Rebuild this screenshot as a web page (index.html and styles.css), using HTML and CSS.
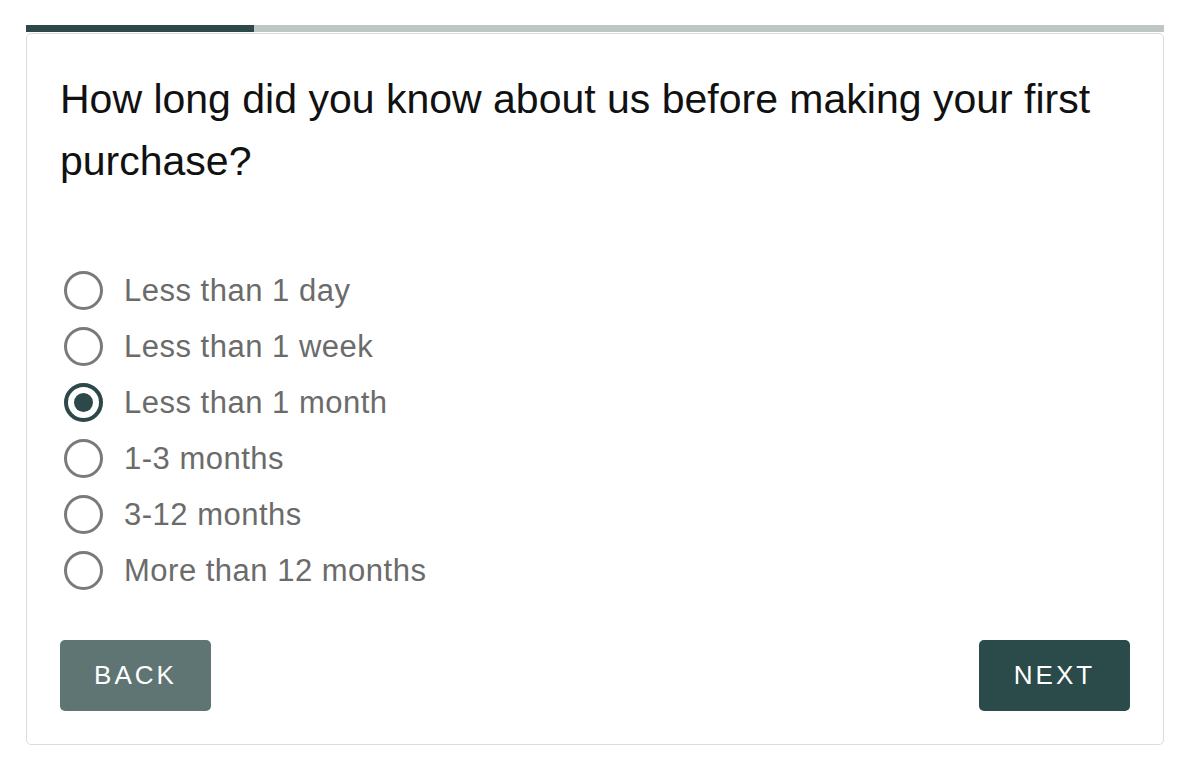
FILE: index.html
```html
<!DOCTYPE html>
<html>
<head>
<meta charset="utf-8">
<link rel="stylesheet" href="styles.css">
</head>
<body>
<div class="page">
  <div class="progress"><div class="progress-fill" style="width:20%"></div></div>
  <div class="card">
    <h1 class="question">How long did you know about us before making your first purchase?</h1>
    <ul class="options">
      <li class="option"><span class="radio"></span><span class="label">Less than 1 day</span></li>
      <li class="option"><span class="radio"></span><span class="label">Less than 1 week</span></li>
      <li class="option selected"><span class="radio"></span><span class="label">Less than 1 month</span></li>
      <li class="option"><span class="radio"></span><span class="label">1-3 months</span></li>
      <li class="option"><span class="radio"></span><span class="label">3-12 months</span></li>
      <li class="option"><span class="radio"></span><span class="label">More than 12 months</span></li>
    </ul>
    <div class="actions">
      <button class="btn btn-back">BACK</button>
      <button class="btn btn-next">NEXT</button>
    </div>
  </div>
</div>
</body>
</html>
```
FILE: styles.css
```css
html, body {
  margin: 0;
  padding: 0;
  background: #ffffff;
}
body {
  font-family: "Liberation Sans", Arial, sans-serif;
}
.page {
  padding: 25px 36px 0 26px;
}
.progress {
  height: 7px;
  background: #bfc6c6;
}
.progress-fill {
  height: 100%;
  background: #2c4848;
}
.card {
  margin-top: 1px;
  border: 1px solid #dcdcdc;
  border-radius: 5px;
  padding: 34px 33px 33px 33px;
  height: 712px;
  box-sizing: border-box;
  display: flex;
  flex-direction: column;
}
.question {
  margin: 0;
  font-weight: normal;
  font-size: 41px;
  line-height: 62px;
  color: #111;
}
.options {
  list-style: none;
  margin: 79px 0 0 0;
  padding: 0;
  display: flex;
  flex-direction: column;
  gap: 17px;
}
.option {
  display: flex;
  align-items: center;
  height: 39px;
  gap: 21px;
}
.radio {
  width: 39px;
  height: 39px;
  box-sizing: border-box;
  border: 3px solid #7a7a7a;
  border-radius: 50%;
  flex: none;
  position: relative;
  margin-left: 4px;
}
.option.selected .radio {
  border: 4px solid #2c4848;
}
.option.selected .radio::after {
  content: "";
  position: absolute;
  left: 50%;
  top: 50%;
  width: 19px;
  height: 19px;
  margin: -9.5px 0 0 -9.5px;
  border-radius: 50%;
  background: #2c4848;
}
.label {
  font-size: 31px;
  color: #6b6b6b;
  letter-spacing: 0.5px;
}
.actions {
  margin-top: auto;
  display: flex;
  justify-content: space-between;
}
.btn {
  border: none;
  border-radius: 5px;
  height: 71px;
  width: 151px;
  color: #ffffff;
  font-family: "Liberation Sans", Arial, sans-serif;
  font-size: 26px;
  letter-spacing: 3px;
  padding: 0;
}
.btn-back {
  background: #5e7573;
}
.btn-next {
  background: #2b4a4a;
}
```
